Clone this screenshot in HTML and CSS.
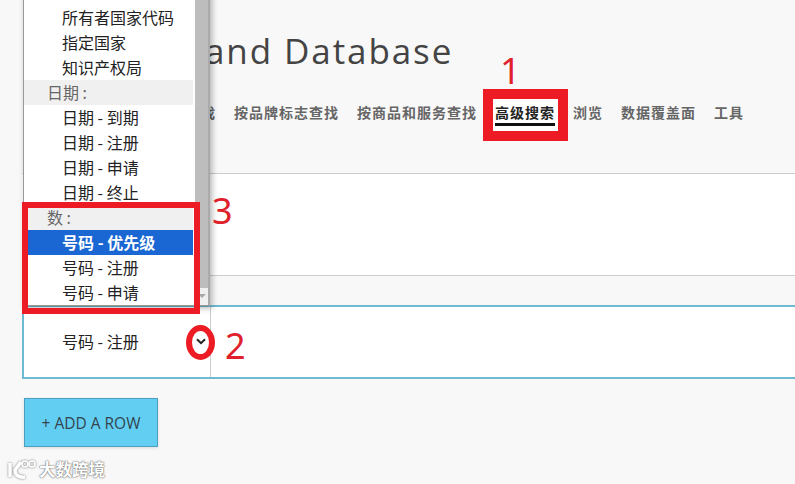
FILE: index.html
```html
<!DOCTYPE html>
<html lang="zh-CN">
<head>
  <meta charset="UTF-8">
  <meta name="viewport" content="width=device-width, initial-scale=1.0">
  <title>Brand Database</title>
  <link rel="stylesheet" href="styles.css">
</head>
<body>
  <div class="page">
    <div class="page-header">
      <h1>and Database</h1>
      <div class="tabs">
        <span class="tab">按名称查找</span>
        <span class="tab">按品牌标志查找</span>
        <span class="tab">按商品和服务查找</span>
        <span class="tab active">高级搜索</span>
        <span class="tab">浏览</span>
        <span class="tab">数据覆盖面</span>
        <span class="tab">工具</span>
      </div>
    </div>
    <div class="search-panel"></div>
    <div class="search-gap"></div>
    <div class="search-row">
      <div class="field-cell">
        <span>号码 - 注册</span>
        <svg class="chevron" width="10" height="7" viewBox="0 0 10 7"><path d="M1 1.2 5 5.2 9 1.2" fill="none" stroke="#222" stroke-width="2"/></svg>
      </div>
      <div class="value-cell"></div>
    </div>
    <button class="add-row">+ ADD A ROW</button>
  </div>

  <!-- open select list -->
  <div class="dropdown">
    <div class="options">
      <div class="opt opt-top">所有者名称</div>
      <div class="opt">所有者国家代码</div>
      <div class="opt">指定国家</div>
      <div class="opt">知识产权局</div>
      <div class="group">日期 :</div>
      <div class="opt">日期 - 到期</div>
      <div class="opt">日期 - 注册</div>
      <div class="opt">日期 - 申请</div>
      <div class="opt">日期 - 终止</div>
      <div class="group">数 :</div>
      <div class="opt selected">号码 - 优先级</div>
      <div class="opt">号码 - 注册</div>
      <div class="opt">号码 - 申请</div>
    </div>
    <div class="scrollbar">
      <div class="thumb"></div>
      <div class="arrow"></div>
    </div>
  </div>

  <!-- red annotations -->
  <div class="mark mark-tab"></div>
  <div class="mark mark-list"></div>
  <div class="mark-circle"></div>
  <span class="num num-1">1</span>
  <span class="num num-2">2</span>
  <span class="num num-3">3</span>

  <div class="watermark">
    <svg width="30" height="22" viewBox="0 0 30 22"><path d="M3 5v14M14 4 8 12c0 5 4 8 10 7" fill="none" stroke="#fff" stroke-width="3.4"/><circle cx="18" cy="6" r="3" fill="none" stroke="#fff" stroke-width="1.6"/><circle cx="25" cy="6" r="3" fill="none" stroke="#fff" stroke-width="1.6"/></svg>
    <span>大数跨境</span>
  </div>
</body>
</html>
```

FILE: styles.css
```css
* {
  box-sizing: border-box;
  margin: 0;
  padding: 0;
}
html, body {
  height: 100%;
  overflow: hidden;
  background-color: #f8f8f8;
  font-family: 'Open Sans', 'Noto Sans CJK SC', sans-serif;
}
.page {
  padding-left: 22px;
}
.page-header {
  position: relative;
  z-index: 1;
  height: 173px;
  padding-top: 27px;
}
.page-header h1 {
  font-size: 35px;
  font-weight: 400;
  line-height: 48px;
  letter-spacing: 1.9px;
  color: #444;
  white-space: nowrap;
  padding-left: 183px;
}
.tabs {
  display: flex;
  gap: 18px;
  margin-top: 26px;
  padding-left: 119px;
}
.tab {
  font-family: 'Noto Sans CJK SC', sans-serif;
  font-size: 14px;
  font-weight: 700;
  line-height: 22px;
  height: 25px;
  letter-spacing: 1px;
  color: #666;
  white-space: nowrap;
}
.tab.active {
  color: #222;
  border-bottom: 3px solid #111;
}
.search-panel {
  height: 103px;
  background-color: #fff;
  border-top: 1px solid #ccc;
  border-bottom: 1px solid #ccc;
}
.search-gap {
  height: 29px;
}
.search-row {
  display: flex;
  height: 74px;
  background-color: #fff;
  border: 2px solid #6fb9d1;
  border-right: none;
}
.field-cell {
  width: 187px;
  display: flex;
  align-items: center;
  justify-content: space-between;
  padding: 0 4px 2px 38px;
  border-right: 1px solid #ccc;
  font-family: 'Noto Sans CJK SC', sans-serif;
  font-size: 16px;
  color: #222;
}
.value-cell {
  flex-grow: 1;
}
.add-row {
  display: block;
  width: 134px;
  height: 49px;
  margin: 19px 0 0 2px;
  background-color: #62cff2;
  border: 1px solid #4d9fc0;
  box-shadow: 0 1px 3px rgba(0, 0, 0, 0.12);
  font-family: 'Open Sans', sans-serif;
  font-size: 15.5px;
  color: #33444f;
}
.dropdown {
  position: absolute;
  z-index: 2;
  left: 23px;
  top: -20px;
  width: 187px;
  height: 326px;
  display: flex;
  background-color: #fff;
  border: 1px solid #999;
  border-top: none;
  border-right: 2px solid #aaa;
  box-shadow: 2px 2px 6px rgba(0, 0, 0, 0.3);
}
.options {
  width: 169px;
  font-family: 'Noto Sans CJK SC', sans-serif;
  font-size: 16px;
}
.opt, .group {
  height: 25px;
  line-height: 25px;
  white-space: nowrap;
}
.opt {
  padding-left: 38px;
  color: #222;
}
.opt-top {
  line-height: 21px;
}
.opt.selected {
  background-color: #1a66d2;
  color: #fff;
  font-weight: 700;
}
.group {
  padding-left: 23px;
  background-color: #f0f0f0;
  color: #666;
}
.scrollbar {
  width: 13px;
  margin-left: 2px;
  background-color: #f0f0f0;
  position: relative;
}
.thumb {
  height: 308px;
  background-color: #bdbdbd;
}
.arrow {
  position: absolute;
  left: 3px;
  bottom: 7px;
  border-left: 4px solid transparent;
  border-right: 4px solid transparent;
  border-top: 4px solid #aaa;
}
.mark {
  position: absolute;
  border-style: solid;
  border-color: #ed1c24;
}
.mark-tab {
  left: 483px;
  top: 89px;
  width: 85px;
  height: 52px;
  border-width: 10px;
  background-color: #fff;
}
.mark-list {
  z-index: 3;
  left: 22px;
  top: 202px;
  width: 178px;
  height: 112px;
  border-width: 6px;
}
.mark-circle {
  position: absolute;
  left: 186px;
  top: 325px;
  width: 29px;
  height: 35px;
  border: 6px solid #ed1c24;
  border-radius: 50%;
}
.chevron {
  position: relative;
  z-index: 2;
}
.num {
  position: absolute;
  z-index: 3;
  font-family: 'Noto Sans', sans-serif;
  font-size: 36px;
  line-height: 40px;
  color: #e0202a;
}
.num-1 { left: 500px; top: 51px; }
.num-2 { left: 225px; top: 326px; }
.num-3 { left: 212px; top: 191px; }
.watermark {
  position: absolute;
  left: 7px;
  top: 457px;
  display: flex;
  align-items: center;
  gap: 2px;
  font-family: 'Noto Sans CJK SC', sans-serif;
  font-size: 16.5px;
  font-weight: 700;
  color: #fff;
  text-shadow: 0 0 2px #666, 0 0 1px #666;
}
.watermark svg {
  filter: drop-shadow(0 0 1px #777);
}
```
